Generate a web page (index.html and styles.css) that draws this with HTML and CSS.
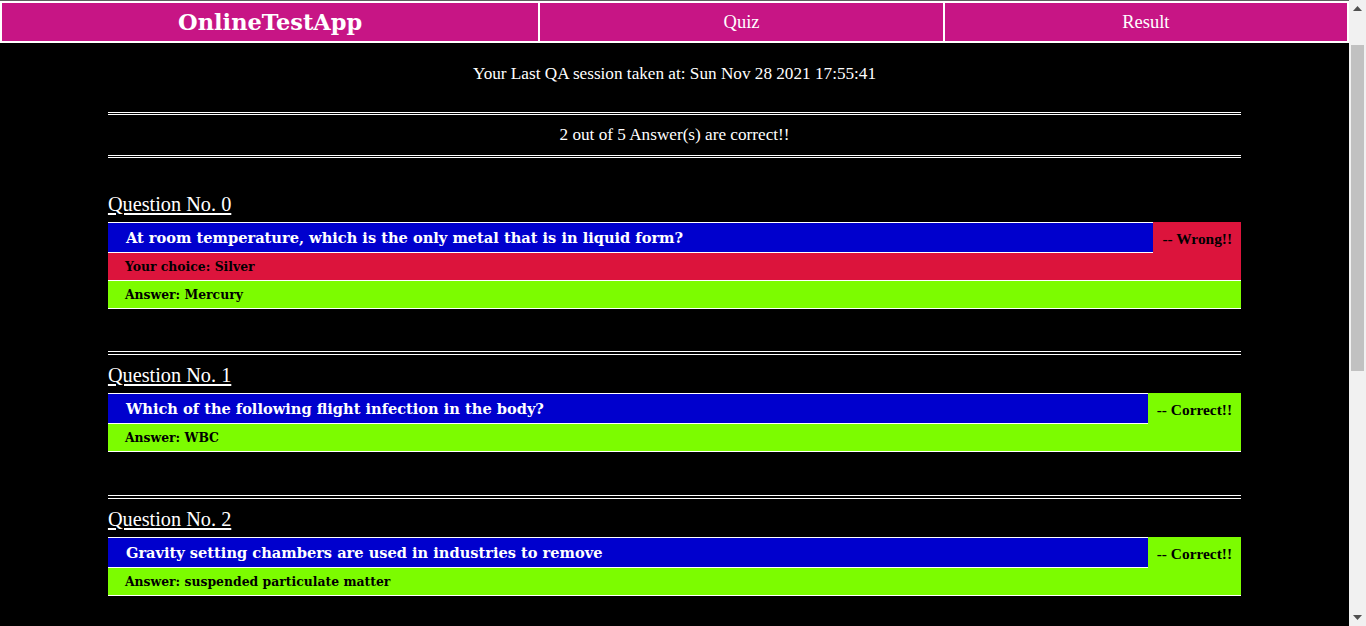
FILE: index.html
```html
<!DOCTYPE html>
<html lang="en">
<head>
<meta charset="utf-8">
<title>OnlineTestApp - Result</title>
<link rel="stylesheet" href="styles.css">
</head>
<body>
<div class="page">
  <header class="topbar">
    <nav class="nav">
      <div class="nav-cell brand">OnlineTestApp</div>
      <div class="nav-cell">Quiz</div>
      <div class="nav-cell">Result</div>
    </nav>
  </header>
  <main class="container">
    <p class="session">Your Last QA session taken at: Sun Nov 28 2021 17:55:41</p>
    <div class="dbl"></div>
    <p class="score">2 out of 5 Answer(s) are correct!!</p>
    <div class="dbl dbl-last"></div>

    <section class="question first">
      <h3 class="qtitle">Question No. 0</h3>
      <div class="qblock wrong">
        <div class="qrow">
          <div class="qtext">At room temperature, which is the only metal that is in liquid form?</div>
          <div class="status">-- Wrong!!</div>
        </div>
        <div class="choice">Your choice: Silver</div>
        <div class="answer">Answer: Mercury</div>
      </div>
    </section>

    <section class="question">
      <div class="sep"></div>
      <h3 class="qtitle">Question No. 1</h3>
      <div class="qblock correct">
        <div class="qrow">
          <div class="qtext">Which of the following flight infection in the body?</div>
          <div class="status">-- Correct!!</div>
        </div>
        <div class="answer">Answer: WBC</div>
      </div>
    </section>

    <section class="question">
      <div class="sep"></div>
      <h3 class="qtitle">Question No. 2</h3>
      <div class="qblock correct">
        <div class="qrow">
          <div class="qtext">Gravity setting chambers are used in industries to remove</div>
          <div class="status">-- Correct!!</div>
        </div>
        <div class="answer">Answer: suspended particulate matter</div>
      </div>
    </section>
  </main>
</div>
<aside class="scrollbar" aria-hidden="true">
  <div class="sb-btn">
    <svg width="9" height="5" viewBox="0 0 9 5"><path d="M0 5 L4.5 0 L9 5 Z" fill="#505050"/></svg>
  </div>
  <div class="sb-track"><div class="sb-thumb"></div></div>
  <div class="sb-btn">
    <svg width="9" height="5" viewBox="0 0 9 5"><path d="M0 0 L9 0 L4.5 5 Z" fill="#505050"/></svg>
  </div>
</aside>
</body>
</html>
```

FILE: styles.css
```css
html, body {
  margin: 0;
  padding: 0;
  height: 100%;
  overflow: hidden;
}

body {
  display: flex;
  background: #000;
  color: #fff;
  font-family: "Liberation Serif", "Times New Roman", serif;
}

.page {
  flex: 1 1 auto;
  min-width: 0;
  height: 100%;
  overflow: hidden;
}

.topbar {
  border-top: 1px solid #5f5f5f;
}

.nav {
  display: flex;
  gap: 2px;
  padding: 2px;
  background: #fff;
}

.nav-cell {
  flex: 3 1 0;
  height: 38px;
  background: #c71585;
  color: #fff;
  display: flex;
  align-items: center;
  justify-content: center;
  font-size: 18.5px;
}

.nav-cell.brand {
  flex: 4 1 0;
  font-family: "DejaVu Serif", serif;
  font-weight: bold;
  font-size: 22.5px;
}

.container {
  width: 84%;
  margin: 0 auto;
}

.session,
.score {
  margin: 0;
  text-align: center;
  font-size: 17.2px;
  line-height: 20px;
}

.session {
  margin-top: 21px;
}

.score {
  margin-top: 10px;
}

.dbl {
  margin-top: 28px;
  border-top: 3px double #fff;
}

.dbl-last {
  margin-top: 10px;
}

.question.first .qtitle {
  margin-top: 35px;
}

.sep {
  height: 2px;
  border-top: 1px solid #fff;
  border-bottom: 1px solid #fff;
}

.qtitle {
  margin: 9px 0 7px;
  font-size: 20.3px;
  line-height: 22px;
  font-weight: normal;
  text-decoration: underline;
  text-underline-offset: 2px;
}

.qblock {
  margin-bottom: 43px;
}

.question.first .qblock {
  margin-bottom: 42px;
}

.qblock.wrong {
  background: #dc143c;
}

.qblock.correct {
  background: #7cfc00;
}

.qrow {
  display: flex;
}

.qtext {
  flex: 1 1 auto;
  background: #0000cd;
  border-top: 1px solid #fff;
  border-bottom: 1px solid #fff;
  padding-left: 18px;
  line-height: 29px;
  font-family: "DejaVu Serif", serif;
  font-weight: bold;
  font-size: 14.6px;
  color: #fff;
}

.status {
  flex: 0 0 auto;
  padding: 4px 9px 0;
  line-height: 26px;
  font-weight: bold;
  font-size: 15.4px;
  color: #000;
}

.choice,
.answer {
  padding-left: 17px;
  line-height: 27px;
  border-bottom: 1px solid #fff;
  font-family: "DejaVu Serif", serif;
  font-weight: bold;
  font-size: 12.4px;
  color: #000;
}

.answer {
  background: #7cfc00;
}

.scrollbar {
  flex: 0 0 17px;
  height: 100%;
  display: flex;
  flex-direction: column;
  background: #f1f1f1;
}

.sb-btn {
  height: 17px;
  display: flex;
  align-items: center;
  justify-content: center;
}

.sb-track {
  flex: 1 1 auto;
  padding-top: 28px;
}

.sb-thumb {
  height: 326px;
  margin: 0 2px;
  background: #c1c1c1;
}
```
